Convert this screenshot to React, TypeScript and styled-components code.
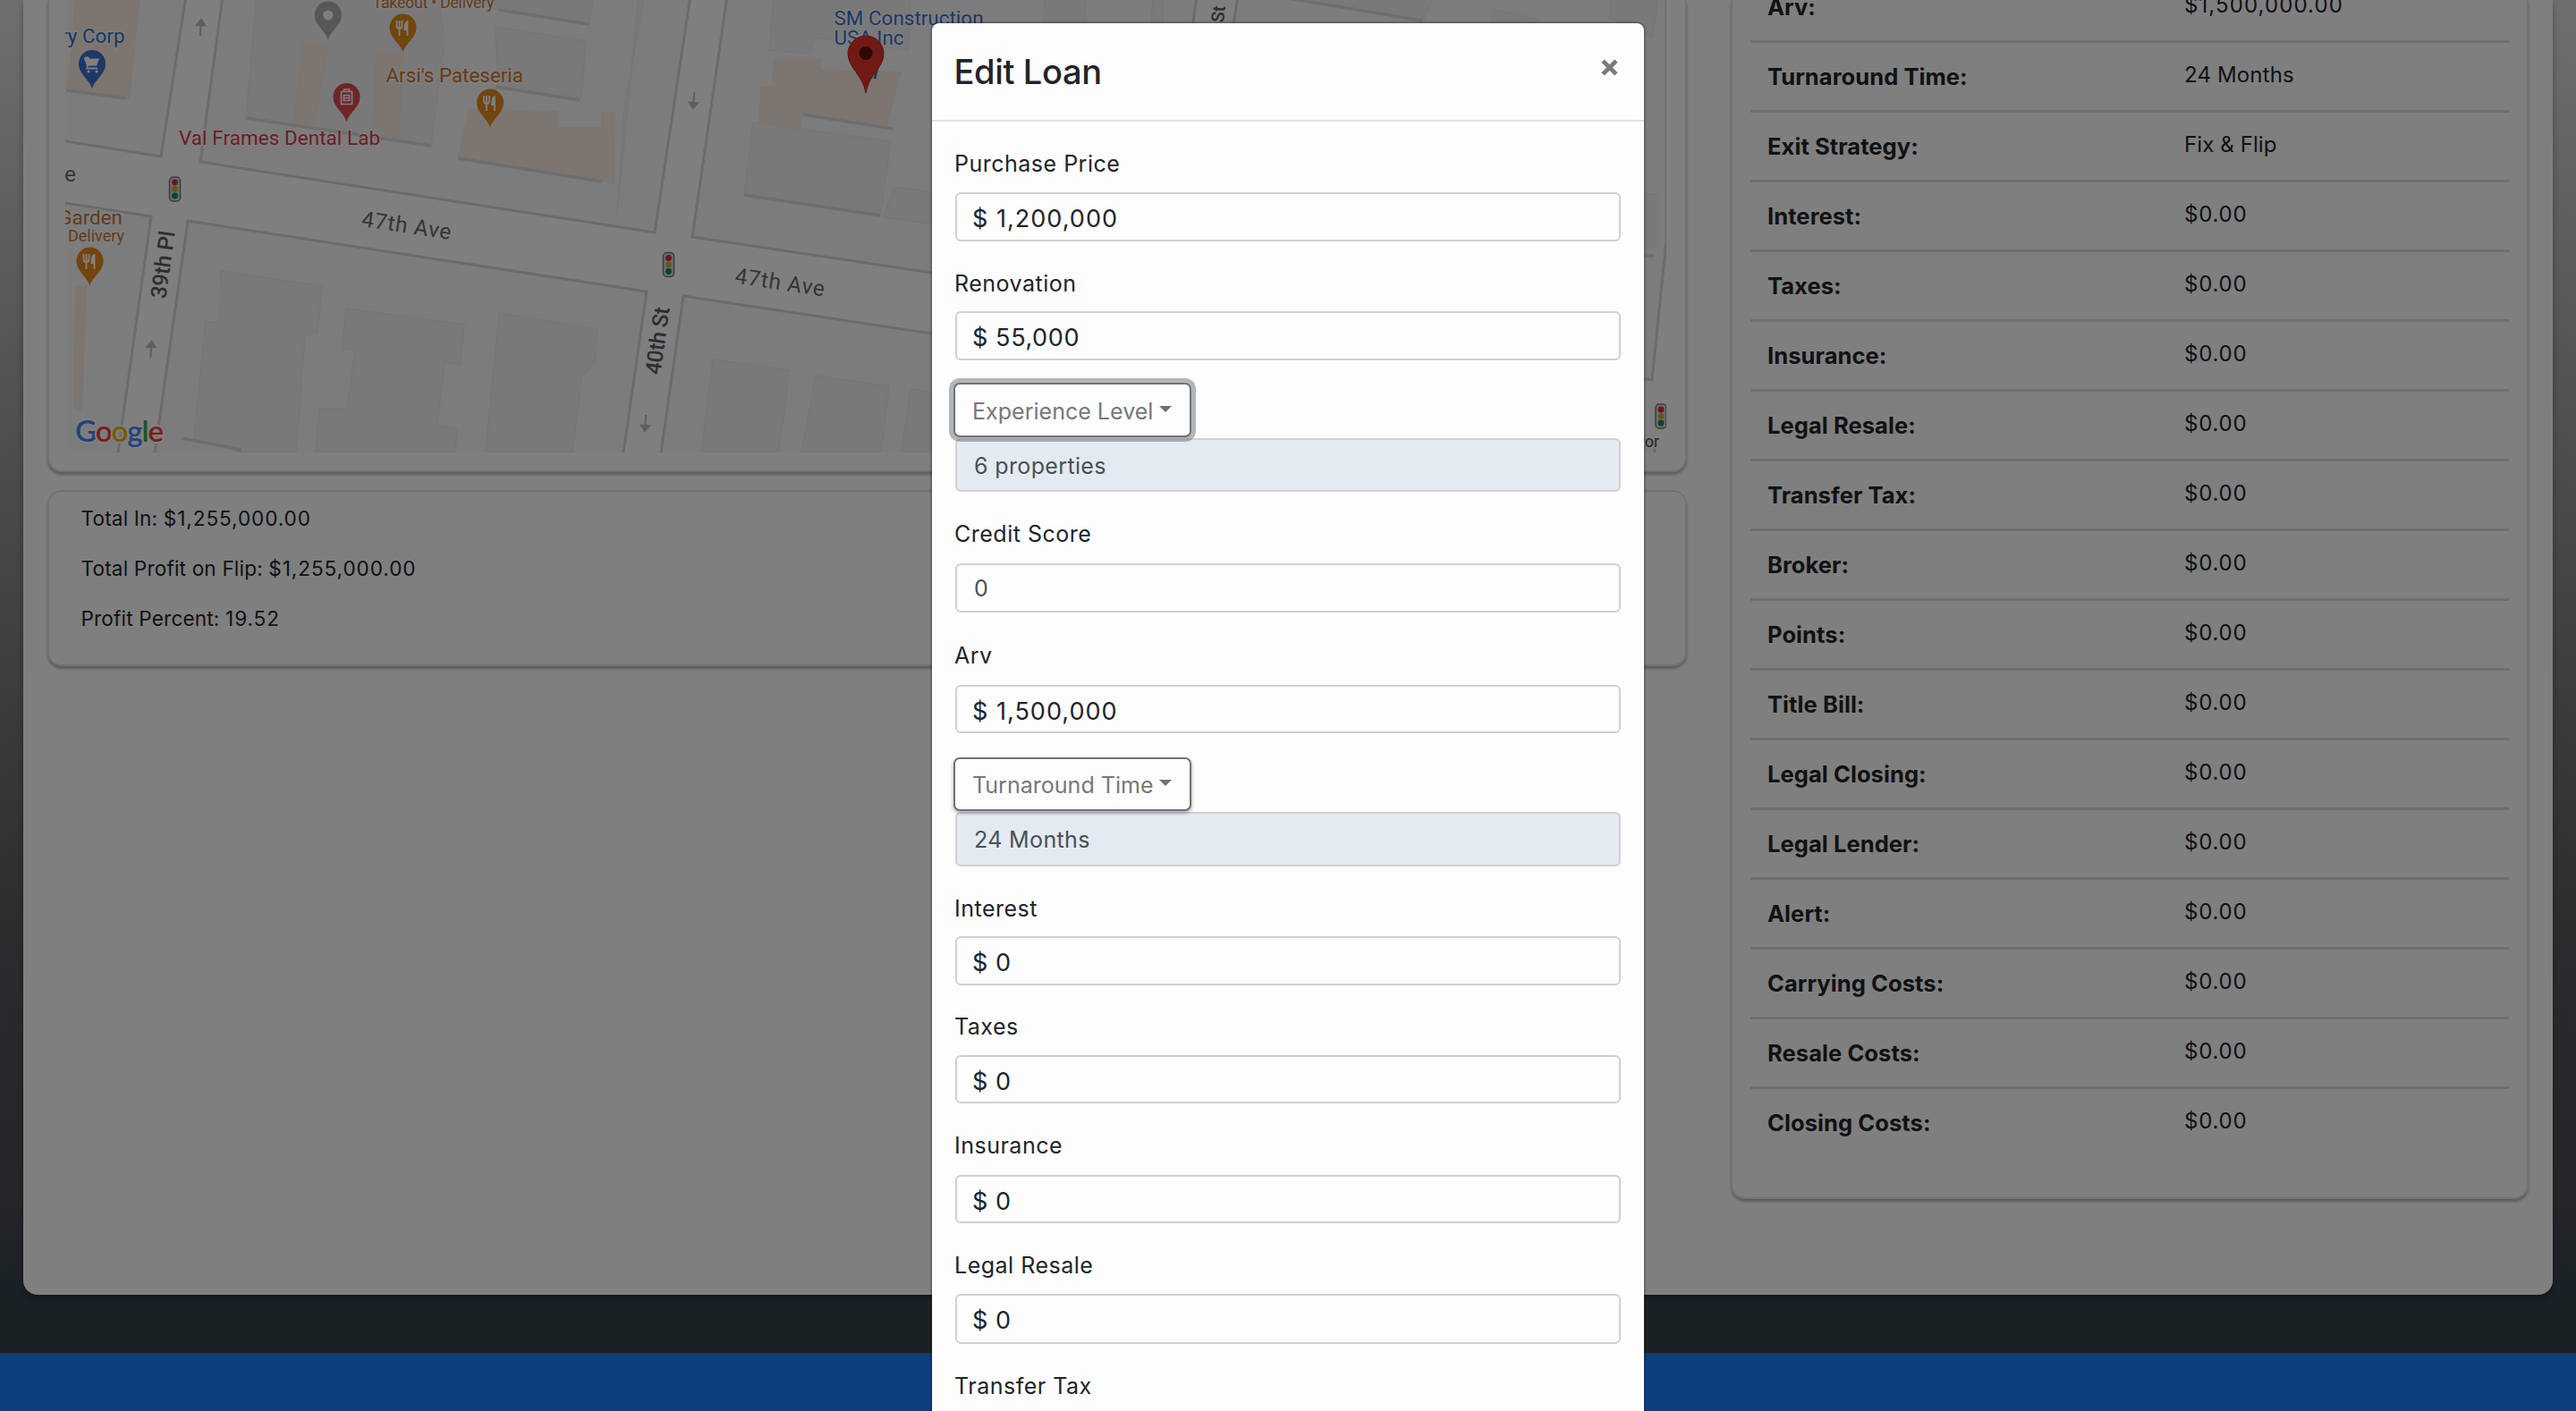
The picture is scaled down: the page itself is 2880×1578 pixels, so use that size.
import React from "react";
import styled, { createGlobalStyle, css } from "styled-components";

const GlobalStyle = createGlobalStyle`
  * { box-sizing: border-box; }
  html, body { margin: 0; padding: 0; }
  body { font-family: Inter, "Liberation Sans", sans-serif; color: #212529; overflow: hidden; }
`;

const Screen = styled.div`
  position: relative;
  width: 2880px;
  height: 1578px;
  overflow: hidden;
  display: flex;
  flex-direction: column;
`;

const Main = styled.main`
  height: 1513px;
  padding: 0 26px 65px;
  background: linear-gradient(
    to bottom,
    #e0e0e0 0,
    #909090 600px,
    #5c5c5c 1020px,
    #56545f 1100px,
    #4b4a54 1350px,
    #38454c 1420px,
    #34424b 1448px
  );
`;

const Footer = styled.footer`
  flex: 1;
  background: #1a7eff;
  border-top: 2px solid #3f6fae;
`;

const PageCard = styled.div`
  height: 1448px;
  padding: 0 27px;
  display: grid;
  grid-template-columns: 1833px 892px;
  column-gap: 49px;
  align-items: start;
  background: #ffffff;
  border-radius: 0 0 16px 16px;
  box-shadow: 0 4px 10px rgba(0, 0, 0, 0.3);
`;

const LeftColumn = styled.div`
  display: grid;
  row-gap: 20px;
`;

const panel = css`
  background: #ffffff;
  border: 2px solid #e4e4e4;
  box-shadow: 0 3px 3px rgba(0, 0, 0, 0.28);
`;

const MapPanel = styled.section`
  ${panel}
  height: 528px;
  padding: 0 18px;
  border-top: 0;
  border-radius: 0 0 16px 16px;
`;

const MapCanvas = styled.svg`
  display: block;
  width: 1790px;
  height: 506px;
  font-family: Roboto, sans-serif;
`;

const ProfitPanel = styled.section`
  ${panel}
  height: 197px;
  padding: 16px 35.5px;
  border-radius: 16px;
`;

const ProfitLine = styled.p`
  margin: 0;
  height: 56px;
  font-size: 22.5px;
  line-height: 28px;
  letter-spacing: 0.2px;
`;

const Amount = styled.span`
  letter-spacing: 0.95px;
`;

const DetailsPanel = styled.section`
  ${panel}
  height: 1341px;
  padding: 0 20px;
  border-top: 0;
  border-radius: 0 0 16px 16px;
  overflow: hidden;
`;

const DetailsList = styled.dl`
  margin: -30px 0 0;
`;

const DetailRow = styled.div`
  display: grid;
  grid-template-columns: 466px 1fr;
  height: 78px;
  padding-left: 19px;
  border-bottom: 3px solid #dddddd;
  &:last-child {
    border-bottom: 0;
  }
`;

const DetailName = styled.dt`
  padding-top: 21.5px;
  font-size: 25.5px;
  font-weight: 700;
  line-height: 32px;
  letter-spacing: 0.08px;
`;

const DetailValue = styled.dd<{ $tracking: number }>`
  margin: 0;
  padding-top: 19.5px;
  font-size: 24px;
  line-height: 32px;
  letter-spacing: ${(p) => p.$tracking}px;
`;

const Backdrop = styled.div`
  position: absolute;
  inset: 0;
  display: flex;
  justify-content: center;
  align-items: flex-start;
  padding-top: 26px;
  background: rgba(0, 0, 0, 0.5);
`;

const Dialog = styled.div`
  width: 796px;
  height: 1700px;
  flex: none;
  background: #fdfdfd;
  border-radius: 8px 8px 0 0;
  box-shadow: 0 0 0 2px rgba(0, 0, 0, 0.2);
`;

const DialogHeader = styled.header`
  display: flex;
  justify-content: space-between;
  height: 110px;
  padding: 31px 29px 0 24.5px;
  border-bottom: 2px solid #dee2e6;
`;

const DialogTitle = styled.h2`
  margin: 0;
  font-size: 38px;
  font-weight: 500;
  line-height: 46px;
  letter-spacing: -0.35px;
`;

const CloseButton = styled.button`
  display: flex;
  width: 19px;
  height: 19px;
  margin: 9px 0 0;
  padding: 0;
  border: 0;
  background: none;
  color: #7a7a7a;
`;

const Form = styled.form`
  padding: 28px 25px;
`;

const Field = styled.div<{ $after?: number }>`
  margin: 0 1px ${(p) => p.$after ?? 28}px;
`;

const Label = styled.label<{ $gap?: number }>`
  display: block;
  margin: 0 -1px ${(p) => p.$gap ?? 12.5}px;
  font-size: 25px;
  line-height: 38px;
  letter-spacing: 0.5px;
`;

const Input = styled.input<{ $tracking?: number; $height?: number }>`
  display: block;
  width: 744px;
  height: ${(p) => p.$height ?? 55}px;
  padding: 4px 16px 0 17px;
  border: 2px solid #cfd1d3;
  border-radius: 6px;
  outline: 0;
  background: #fdfdfd;
  color: #212529;
  font: 400 27px Inter, "Liberation Sans", sans-serif;
  letter-spacing: ${(p) => p.$tracking ?? 0.6}px;
`;

const PlainInput = styled(Input)`
  padding: 0 16px 0 19px;
  font-size: 25px;
  letter-spacing: 0.36px;
  color: #495057;
`;

const ReadOnlyInput = styled(PlainInput)`
  margin-top: 1px;
  padding-top: 2px;
  background: #e4eaf1;
`;

const DropdownButton = styled.button<{ $focused?: boolean; $height: number }>`
  position: relative;
  z-index: 1;
  display: flex;
  align-items: center;
  gap: 6.5px;
  height: ${(p) => p.$height}px;
  width: 266px;
  margin: 0 -2px;
  padding: 2px 0 0 19px;
  border: 2px solid #6f7275;
  border-radius: 7px;
  background: #fdfdfd;
  color: #75787b;
  font: 400 25px Inter, "Liberation Sans", sans-serif;
  letter-spacing: 0.02px;
  white-space: nowrap;
  box-shadow: ${(p) =>
    p.$focused ? "0 0 0 5px rgba(112, 116, 120, 0.52)" : "0 2px 4px rgba(0, 0, 0, 0.35)"};
`;

const Caret = styled.span`
  margin-top: -4px;
  border-top: 7.5px solid #6f7275;
  border-left: 7.5px solid transparent;
  border-right: 7.5px solid transparent;
`;

const details: Array<[string, string, number]> = [
  ["Arv:", "$1,500,000.00", 1.1],
  ["Turnaround Time:", "24 Months", 0.15],
  ["Exit Strategy:", "Fix & Flip", 0.1],
  ...[
    "Interest:",
    "Taxes:",
    "Insurance:",
    "Legal Resale:",
    "Transfer Tax:",
    "Broker:",
    "Points:",
    "Title Bill:",
    "Legal Closing:",
    "Legal Lender:",
    "Alert:",
    "Carrying Costs:",
    "Resale Costs:",
    "Closing Costs:",
  ].map((name): [string, string, number] => [name, "$0.00", 0.75]),
];

type PinKind = "food" | "shop" | "dental" | "place";
const pinColor: Record<PinKind, string> = {
  food: "#e58a1e",
  shop: "#3b6fd0",
  dental: "#de4a50",
  place: "#aeaeae",
};

const Pin = ({ x, y, kind }: { x: number; y: number; kind: PinKind }) => (
  <g transform={`translate(${x} ${y})`}>
    <path
      d="M0 43C-2 33-15 27-15 14.500A15 15 0 0 1 15 14.500C15 27 2 33 0 43Z"
      fill={pinColor[kind]}
    />
    {kind === "food" && (
      <g stroke="#fff" fill="none" strokeWidth="1.800">
        <path d="M-7 7v6q0 3 3 3t3-3V7M-4 7v17" />
        <path d="M5 24V8q-3 1-3 9h3" fill="#fff" />
      </g>
    )}
    {kind === "shop" && (
      <g fill="#fff">
        <path d="M-8 7h4l1 2H8L5 17H-4l-1 2H6v2H-7l1-4-3-8Z" />
        <circle cx="-4" cy="23.500" r="1.600" />
        <circle cx="5" cy="23.500" r="1.600" />
      </g>
    )}
    {kind === "dental" && (
      <g fill="none" stroke="#fff" strokeWidth="1.700">
        <path d="M-6 9H6V23H-6ZM-3 9V6.500H3V9M-3 13H3V19H-3ZM-3 16H3" />
      </g>
    )}
    {kind === "place" && <circle cy="15" r="5.500" fill="#fff" />}
  </g>
);

const TrafficLight = ({ x, y }: { x: number; y: number }) => (
  <g transform={`translate(${x} ${y})`}>
    <rect x="-6" y="-13.500" width="12" height="27" rx="4" fill="#d9d9d9" stroke="#77797b" strokeWidth="1.500" />
    <circle cy="-7.500" r="3.400" fill="#d02a50" />
    <circle r="3.400" fill="#d8a82a" />
    <circle cy="7.500" r="3.400" fill="#178a4a" />
  </g>
);

const Arrow = ({ x, y, down }: { x: number; y: number; down?: boolean }) => (
  <path
    transform={`translate(${x} ${y}) rotate(${down ? 184 : 4})`}
    d="M0 10V-5M-4.500-2 0-8 4.500-2Z"
    stroke="#bdbdbd"
    strokeWidth="2.200"
    fill="#bdbdbd"
  />
);

const blocks = [
  "M60 156 180 175 208-5H60Z",
  "M224 181 732 260 772-5H249Z",
  "M774 265 1290 342 1338-5H813Z",
  "M60 225 169 242 130 520H60Z",
  "M210 247 723 326 695 520H171Z",
  "M764 331 1280 409 1262 520H737Z",
  "M1330 349 1847 425 1863 270V-5H1384Z",
  "M1322 416 1850 495V520H1306Z",
];

const buildings = [
  "M287-5 275 132 482 163 497 45 490-5Z",
  "M545-5V8L658 27 664-5ZM554 30 655 46 650 110 557 97ZM720-5 697 128 690 240 714-5Z",
  "M865-5 860 56 905 60 912 42 1016 56 1018-5Z",
  "M842 137 996 158 984 241 832 218Z",
  "M1000 209 1050 216V252L988 243Z",
  "M247 303 360 320 355 372 341 375 331 506H270L217 490 230 360H245Z",
  "M387 345 519 363 515 408 497 405 489 475 512 480 508 506H353L357 457H388L397 391H382Z",
  "M558 350 668 368 665 405 650 422 640 506H543Z",
  "M797 402 882 414 877 462 870 506H784Z",
  "M912 420 994 432 985 506H896Z",
  "M1018 435 1050 440V506H1008Z",
  "M1169-5 1165 40H1211L1215-5ZM1290-5 1285 40H1300V-5Z",
  "M1434-5 1590 25 1604-5ZM1668 10 1720 22V40H1668ZM1800-5V20L1848 42 1854-5Z",
  "M1790 217H1851V277H1790Z",
];

const shops = [
  "M84-5H157L145 112 75 102 80 50Z",
  "M338 48H368L352 142 328 138Z",
  "M420 57 452 62 446 158 417 142Z",
  "M84 320H97L92 462 82 455Z",
  "M518 147 524 122 623 124 624 142H672V126H688L687 206 673 203 512 177Z",
  "M865 65H920L918 78 1008 80 991 143 897 129 895 144 848 138 850 97 863 96Z",
];

const shades = [
  "M275 132 482 163",
  "M512 177 673 203",
  "M558 11 658 27",
  "M554 97 648 112",
  "M832 218 984 241",
  "M897 128 998 144",
  "M203 490 270 503",
  "M1434-3 1590 23",
  "M1820 286H1850",
  "M74 101 140 110",
];

const PropertyMap = () => (
  <MapCanvas viewBox="73 0 1790 506">
    <rect x="73" width="1790" height="506" fill="#ffffff" />
    {blocks.map((d) => (
      <path key={d} d={d} fill="#f8f8f8" stroke="#d6d6d6" strokeWidth="3" />
    ))}
    {buildings.map((d) => (
      <path key={d} d={d} fill="#f2f2f2" stroke="#ededed" strokeWidth="1.500" />
    ))}
    {shops.map((d) => (
      <path key={d} d={d} fill="#f9eae0" />
    ))}
    {shades.map((d) => (
      <path key={d} d={d} stroke="#dcdcdc" strokeWidth="3.500" fill="none" />
    ))}
    <Arrow x={224.5} y={30} />
    <Arrow x={169} y={390} />
    <Arrow x={775.5} y={113} down />
    <Arrow x={721.5} y={474} down />

    <g fontSize="24.500" fill="#6a6b6d" stroke="#fff" strokeWidth="3" paintOrder="stroke">
      <text x="85" y="202.500" textAnchor="end">Ave</text>
      <text transform="translate(454 252) rotate(8.6)" x="-50" y="8.500" textLength="101">47th Ave</text>
      <text transform="translate(871.500 315.500) rotate(8.6)" x="-50" y="8.500" textLength="101">47th Ave</text>
      <g fontWeight="500" fill="#5c5d5f">
        <text transform="translate(182 296) rotate(-82)" x="-38" y="8.500" textLength="76">39th Pl</text>
        <text transform="translate(735 381) rotate(-82)" x="-38" y="8.500" textLength="76">40th St</text>
        <text transform="translate(1361 15) rotate(-84)" x="-10" y="8" fontSize="20">St</text>
      </g>
    </g>

    <Pin x={103} y={56.5} kind="shop" />
    <Pin x={450.5} y={16} kind="food" />
    <Pin x={548} y={100} kind="food" />
    <Pin x={100.5} y={277} kind="food" />
    <Pin x={387.5} y={93.5} kind="dental" />
    <Pin x={366.8} y={2} kind="place" />
    <TrafficLight x={195.5} y={211.5} />
    <TrafficLight x={747.5} y={296} />
    <TrafficLight x={1857} y={465.5} />

    <g fontSize="22.400" stroke="#fff" strokeWidth="3" paintOrder="stroke" strokeOpacity="0.7">
      <text x="139.500" y="47.500" textAnchor="end" fill="#2a70c8">ry Corp</text>
      <g fill="#cb7634">
        <text x="416.500" y="8.500" fontSize="18" textLength="136">Takeout • Delivery</text>
        <text x="431.500" y="91.500" textLength="153.500">Arsi's Pateseria</text>
        <text x="137" y="251" textAnchor="end">Garden</text>
        <text x="139" y="269.500" fontSize="18" textAnchor="end">Delivery</text>
      </g>
      <text x="200" y="162" fill="#dc384c" textLength="225">Val Frames Dental Lab</text>
      <g fill="#3f70cd">
        <text x="932.500" y="27.500" textLength="167">SM Construction</text>
        <text x="932.500" y="49.500" textLength="78">USA Inc</text>
      </g>
      <text x="1855" y="500" textAnchor="end" fontSize="18" fill="#4c4d4f">Map error</text>
    </g>

    <path d="M978 88 982 70" stroke="#3f70cd" strokeWidth="3" />
    <path
      d="M968 104C965 84 948 76 948 60A20 20 0 0 1 988 60C988 76 971 84 968 104Z"
      fill="#e0342c"
      stroke="#c5271f"
      strokeWidth="1"
    />
    <circle cx="968" cy="59.500" r="7.500" fill="#5e0e0b" />

    <text
      x="84"
      y="494"
      fontFamily="Lato, sans-serif"
      fontSize="33"
      fontWeight="600"
      textLength="99"
      stroke="#fff"
      strokeWidth="4"
      paintOrder="stroke"
    >
      <tspan fill="#4285f4">G</tspan>
      <tspan fill="#ea4335">o</tspan>
      <tspan fill="#e6b905">o</tspan>
      <tspan fill="#4285f4">g</tspan>
      <tspan fill="#34a853">l</tspan>
      <tspan fill="#ea4335">e</tspan>
    </text>
  </MapCanvas>
);

const MoneyField = ({
  label,
  value,
  after,
  gap,
  height,
  tracking,
}: {
  label: string;
  value: string;
  after?: number;
  gap?: number;
  height?: number;
  tracking?: number;
}) => (
  <Field $after={after}>
    <Label $gap={gap}>{label}</Label>
    <Input defaultValue={value} $tracking={tracking} $height={height} />
  </Field>
);

export default function App() {
  return (
    <Screen>
      <GlobalStyle />
      <Main>
        <PageCard>
          <LeftColumn>
            <MapPanel>
              <PropertyMap />
            </MapPanel>
            <ProfitPanel>
              <ProfitLine>
                Total In: <Amount>$1,255,000.00</Amount>
              </ProfitLine>
              <ProfitLine>
                Total Profit on Flip: <Amount>$1,255,000.00</Amount>
              </ProfitLine>
              <ProfitLine>
                Profit Percent: <Amount>19.52</Amount>
              </ProfitLine>
            </ProfitPanel>
          </LeftColumn>
          <DetailsPanel>
            <DetailsList>
              {details.map(([name, value, tracking]) => (
                <DetailRow key={name}>
                  <DetailName>{name}</DetailName>
                  <DetailValue $tracking={tracking}>{value}</DetailValue>
                </DetailRow>
              ))}
            </DetailsList>
          </DetailsPanel>
        </PageCard>
      </Main>
      <Footer />
      <Backdrop>
        <Dialog role="dialog">
          <DialogHeader>
            <DialogTitle>Edit Loan</DialogTitle>
            <CloseButton aria-label="Close">
              <svg width="19" height="19" viewBox="0 0 18 18">
                <path d="M2 2 16 16M16 2 2 16" stroke="currentColor" strokeWidth="4.600" />
              </svg>
            </CloseButton>
          </DialogHeader>
          <Form>
            <MoneyField label="Purchase Price" value="$ 1,200,000" tracking={1.03} />
            <MoneyField label="Renovation" value="$ 55,000" after={25} />
            <Field>
              <DropdownButton type="button" $focused $height={61}>
                Experience Level
                <Caret />
              </DropdownButton>
              <ReadOnlyInput readOnly defaultValue="6 properties" $height={60} />
            </Field>
            <Field $after={29}>
              <Label $gap={14}>Credit Score</Label>
              <PlainInput defaultValue="0" />
            </Field>
            <MoneyField
              label="Arv"
              value="$ 1,500,000"
              tracking={1.03}
              gap={14}
              height={54}
              after={26.5}
            />
            <Field>
              <DropdownButton type="button" $height={60}>
                Turnaround Time
                <Caret />
              </DropdownButton>
              <ReadOnlyInput readOnly defaultValue="24 Months" $height={61} />
            </Field>
            <MoneyField label="Interest" value="$ 0" after={26.5} />
            <MoneyField label="Taxes" value="$ 0" gap={13.5} height={54} />
            <MoneyField label="Insurance" value="$ 0" gap={14} height={54} />
            <MoneyField label="Legal Resale" value="$ 0" height={56} />
            <MoneyField label="Transfer Tax" value="$ 0" />
          </Form>
        </Dialog>
      </Backdrop>
    </Screen>
  );
}
